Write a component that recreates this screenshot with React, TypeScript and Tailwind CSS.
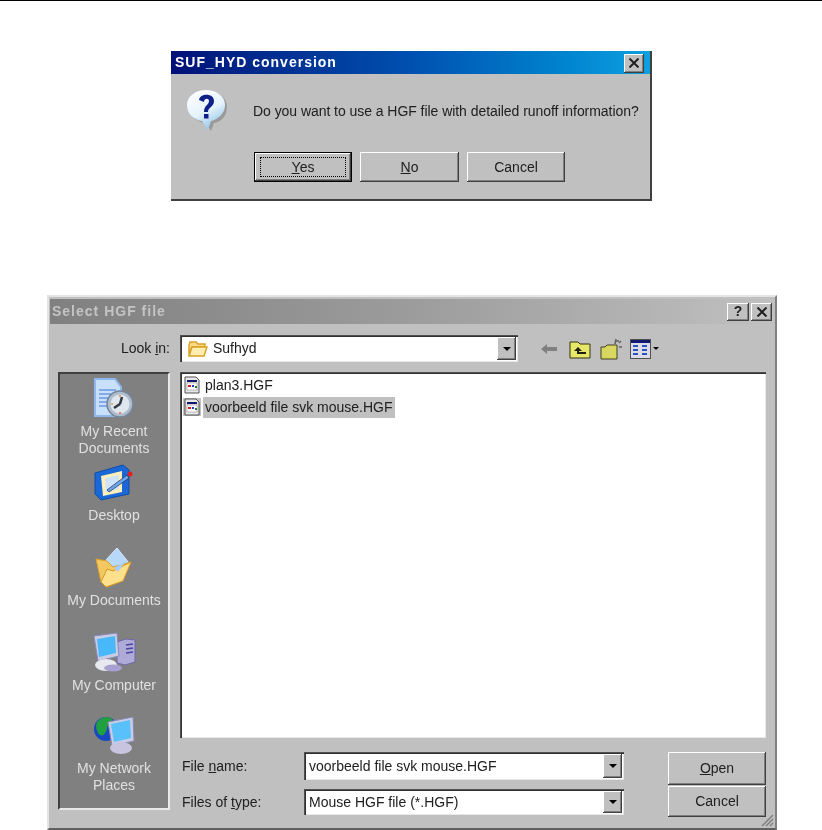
import type React from "react"

const raised = "shadow-[inset_-1px_-1px_0_#404040,inset_1px_1px_0_#ffffff,inset_-2px_-2px_0_#808080]"
const sunken = "shadow-[inset_1px_1px_0_#505050,inset_2px_2px_0_#303030,inset_-1px_-1px_0_#e8e8e8]"

const QuestionIcon = () => (
  <svg width="42" height="44" viewBox="0 0 42 44">
    <defs>
      <linearGradient id="bubble" x1="0.2" y1="0" x2="0.7" y2="1">
        <stop offset="0" stopColor="#ffffff" />
        <stop offset="0.55" stopColor="#e4f2fc" />
        <stop offset="1" stopColor="#88c0e8" />
      </linearGradient>
    </defs>
    <path d="M22 3C32 3 41 8 41 18s-7 15-13 16l-3 8-5-8C10 33 3 27 3 18S12 3 22 3z" fill="#9a9a9a" />
    <path d="M20 1C30 1 39 7 39 16s-8 15-14 16l-3 9-6-9C8 31 1 25 1 16S10 1 20 1z" fill="url(#bubble)" />
    <path d="M13 11c1-7 15-7 15 1 0 6-6 6-6 11h-4c0-7 5-7 5-11 0-3-5-3-5 1z" fill="#10208a" />
    <rect x="18" y="25" width="4.5" height="4.5" fill="#10208a" />
  </svg>
)

const CloseGlyph = () => (
  <svg width="12" height="10" viewBox="0 0 12 10">
    <path d="M1.5 0.5L10.5 9.5M10.5 0.5L1.5 9.5" stroke="#202020" strokeWidth="2" />
  </svg>
)

const FolderSmall = () => (
  <svg width="20" height="18" viewBox="0 0 20 18">
    <path d="M1 5l1-3h6l2 2h7v3H4L1 15z" fill="#f8dc88" stroke="#d8a020" strokeWidth="1.4" />
    <path d="M1 16l3-9h15l-3 9z" fill="#ffeeb0" stroke="#d8a020" strokeWidth="1.4" />
  </svg>
)

const FileIcon = () => (
  <svg width="18" height="18" viewBox="0 0 18 18">
    <path d="M2 1h11l3 3v13H2z" fill="#e8e8e8" stroke="#505050" />
    <rect x="4" y="4" width="10" height="2" fill="#101870" />
    <rect x="4" y="7" width="10" height="7" fill="#ffffff" stroke="#808080" strokeWidth="0.5" />
    <rect x="5" y="9" width="3" height="2" fill="#d02020" />
    <rect x="9" y="9" width="2" height="2" fill="#2040d0" />
    <rect x="12" y="10" width="2" height="2" fill="#208040" />
  </svg>
)

const RecentIcon = () => (
  <svg width="40" height="41" viewBox="0 0 40 41">
    <path d="M1 1h20l6 8v29H1z" fill="#c8e0fa" stroke="#8fb8ee" strokeWidth="2" />
    <path d="M5 12h17M5 16h13M5 20h10M5 24h10M5 28h10" stroke="#6a98e0" strokeWidth="1.5" />
    <circle cx="26" cy="26" r="13" fill="#aebccb" stroke="#74859a" strokeWidth="1.5" />
    <circle cx="26" cy="26" r="9.5" fill="#dfe6ee" />
    <path d="M26 26l-6 4M26 26l2-7" stroke="#303840" strokeWidth="2.5" />
    <circle cx="26" cy="18" r="1" fill="#e08050" />
    <circle cx="26" cy="35" r="1" fill="#e06060" />
    <circle cx="18" cy="26" r="1" fill="#e0a050" />
  </svg>
)

const DesktopIcon = () => (
  <svg width="40" height="37" viewBox="0 0 40 37">
    <path d="M1 9l28-8 6 5v24L7 36 1 30z" fill="#1a68d8" stroke="#104ca8" />
    <path d="M7 12l21-5v21L9 32z" fill="#ffeeb8" />
    <path d="M11 14l14-3v14l-13 3z" fill="#cfe4fa" />
    <path d="M13 26l20-15 2 3-20 14z" fill="#70a8e8" stroke="#203870" strokeWidth="0.8" />
    <circle cx="36" cy="10" r="2.5" fill="#e02020" />
  </svg>
)

const DocumentsIcon = () => (
  <svg width="38" height="41" viewBox="0 0 38 41">
    <path d="M10 14L22 1l12 15-14 12z" fill="#b8d8fa" stroke="#d8eaff" />
    <path d="M1 12l11 2 6 6 18-5-9 18-15 7-6-5z" fill="#f4c860" stroke="#d8a030" />
    <path d="M6 35l6-13 6 2 18-9-8 19-17 6z" fill="#fce08c" stroke="#d89820" />
    <path d="M19 21l12-7-8 11z" fill="#a8cdf4" />
  </svg>
)

const ComputerIcon = () => (
  <svg width="43" height="40" viewBox="0 0 43 40">
    <path d="M24 10l9-3 9 1v22l-10 3-8-2z" fill="#b0aad8" stroke="#6c66a8" />
    <path d="M33 13l7-1M33 17l7-1M33 21l7-1" stroke="#48489c" strokeWidth="1.5" />
    <path d="M1 4L24 1l2 23-21 5z" fill="#c8cce4" stroke="#8a8ab8" />
    <path d="M4 7l18-3 1 17-17 4z" fill="#48b8fa" />
    <ellipse cx="13" cy="33" rx="11" ry="6" fill="#e8e8f0" />
    <ellipse cx="20" cy="36" rx="9" ry="3.5" fill="#a8a0d0" />
  </svg>
)

const NetworkIcon = () => (
  <svg width="42" height="38" viewBox="0 0 42 38">
    <circle cx="13" cy="13" r="12" fill="#1848c0" />
    <path d="M4 6c5-6 12-6 15-3 2 5-5 5-5 9s-4 9-7 7-5-9-3-13z" fill="#20a040" />
    <path d="M15 6l25-5 1 24-22 5z" fill="#c8cce4" stroke="#8a8ab8" />
    <path d="M18 8l19-4 1 18-17 4z" fill="#58c0fa" />
    <ellipse cx="28" cy="32" rx="11" ry="6" fill="#c8c4e0" />
  </svg>
)

const BackArrow = () => (
  <svg width="16" height="12" viewBox="0 0 16 12">
    <path d="M0 6l6-5v3h10v4H6v3z" fill="#808080" />
  </svg>
)

const UpFolder = () => (
  <svg width="22" height="20" viewBox="0 0 22 20">
    <path d="M1 19V3h8l2 2h10v14z" fill="#e8e868" stroke="#303010" />
    <path d="M9 8l-4 4h3v3h9v-2h-7v-1h3z" fill="#202010" />
  </svg>
)

const NewFolder = () => (
  <svg width="22" height="22" viewBox="0 0 22 22">
    <path d="M1 21V9h4l2-2h10v14z" fill="#d8d860" stroke="#404020" />
    <path d="M15 6l1-5M19 5l2-2M19 9h3M16 3h3" stroke="#606060" strokeWidth="1.5" />
  </svg>
)

const ViewsIcon = () => (
  <svg width="21" height="20" viewBox="0 0 21 20">
    <rect x="0.5" y="0.5" width="20" height="19" fill="#dcdce8" stroke="#505050" />
    <rect x="1" y="1" width="19" height="3" fill="#101870" />
    <path d="M3 7h5M3 11h5M3 15h5M12 7h5M12 11h5M12 15h5" stroke="#3050c0" strokeWidth="2" />
  </svg>
)

const ComboArrow = () => (
  <div className={`w-[19px] flex items-center justify-center bg-[#c0c0c0] ${raised}`}>
    <div className="w-0 h-0 border-x-[4px] border-x-transparent border-t-[4px] border-t-black" />
  </div>
)

const WinButton: React.FC<{ className: string; children: React.ReactNode }> = ({ className, children }) => (
  <div className={`flex items-center justify-center bg-[#c0c0c0] text-[14px] text-[#202020] ${raised} ${className}`}>
    {children}
  </div>
)

const PlaceItem: React.FC<{ icon: React.ReactNode; label: string[]; height: string }> = ({ icon, label, height }) => (
  <div className={`flex flex-col items-center ${height}`}>
    <div className="h-[44px] flex items-center">{icon}</div>
    <div className="mt-[3px] text-center text-[14px] leading-[17px] text-[#e0e0e0]">
      {label.map((l) => (
        <div key={l}>{l}</div>
      ))}
    </div>
  </div>
)

const FileRow: React.FC<{ name: string; selected?: boolean }> = ({ name, selected }) => (
  <div className="flex items-center h-[22px] gap-[2px]">
    <div className={selected ? "bg-[#c0c0c0]" : ""}>
      <FileIcon />
    </div>
    <span className={`px-[2px] text-[14px] leading-[21px] text-[#202020] ${selected ? "bg-[#c0c0c0]" : ""}`}>{name}</span>
  </div>
)

export default function App() {
  return (
    <div className="w-[822px] h-[830px] overflow-hidden bg-white blur-[0.7px] font-['Liberation_Sans',Arial,sans-serif]">
      <div className="h-px bg-black" />

      {/* message box */}
      <div className="mt-[50px] ml-[171px] w-[481px] h-[150px] bg-[#c0c0c0] border-r-2 border-b-2 border-[#404040] flex flex-col">
        <div className="h-[23px] pl-[4px] pr-[6px] flex items-center justify-between bg-gradient-to-r from-[#000f78] via-[#0050b0] to-[#10a0e0]">
          <span className="text-[14px] font-bold tracking-[1px] text-white">SUF_HYD conversion</span>
          <div className={`w-[20px] h-[19px] mt-[1px] flex items-center justify-center bg-[#c0c0c0] ${raised}`}>
            <CloseGlyph />
          </div>
        </div>
        <div className="flex items-center pl-[15px] mt-[15px]">
          <QuestionIcon />
          <span className="ml-[25px] text-[14px] tracking-[-0.05px] text-[#202020]">
            Do you want to use a HGF file with detailed runoff information?
          </span>
        </div>
        <div className="flex gap-[8px] ml-[83px] mt-[19px]">
          <div className="w-[98px] h-[30px] p-px bg-black">
            <WinButton className="w-full h-full">
              <div className="w-[86px] h-[20px] border border-dotted border-black flex items-center justify-center">
                <span><u>Y</u>es</span>
              </div>
            </WinButton>
          </div>
          <WinButton className="w-[99px] h-[30px]"><span><u>N</u>o</span></WinButton>
          <WinButton className="w-[98px] h-[30px]">Cancel</WinButton>
        </div>
      </div>

      {/* open file dialog */}
      <div className="mt-[94px] ml-[47px] w-[730px] h-[535px] bg-[#c0c0c0] border-t-2 border-l-2 border-[#e4e4e4] border-r-2 border-r-[#808080] border-b-2 border-b-[#606060] flex flex-col relative">
        <div className="mt-[2px] ml-px mr-[2px] h-[25px] pl-[2px] pr-px flex items-center justify-between bg-gradient-to-r from-[#808080] via-[#9c9c9c] to-[#c0c0c0]">
          <span className="text-[14px] font-bold tracking-[1px] text-[#c4c4c4]">Select HGF file</span>
          <div className="flex gap-[2px]">
            <div className={`w-[22px] h-[18px] flex items-center justify-center bg-[#c0c0c0] text-[14px] font-bold text-[#202020] ${raised}`}>?</div>
            <div className={`w-[21px] h-[18px] flex items-center justify-center bg-[#c0c0c0] ${raised}`}><CloseGlyph /></div>
          </div>
        </div>

        <div className="flex items-center mt-[11px] h-[27px]">
          <span className="w-[121px] text-right text-[14px] text-[#202020]">Look <u>i</u>n:</span>
          <div className={`ml-[10px] w-[338px] h-full flex bg-white p-[2px] ${sunken}`}>
            <div className="flex-1 flex items-center gap-[5px] pl-[6px] text-[14px] text-[#202020]">
              <FolderSmall />
              Sufhyd
            </div>
            <ComboArrow />
          </div>
          <div className="flex items-center ml-[23px]">
            <BackArrow />
            <div className="ml-[12px]"><UpFolder /></div>
            <div className="ml-[9px]"><NewFolder /></div>
            <div className="ml-[8px]"><ViewsIcon /></div>
            <div className="ml-[2px] w-0 h-0 border-x-[3px] border-x-transparent border-t-[3px] border-t-black" />
          </div>
        </div>

        <div className="flex mt-[10px] h-[445px]">
          <div className="ml-[9px] w-[112px] flex flex-col">
            <div className="w-full h-[438px] bg-[#808080] border-l-2 border-t-2 border-[#404040] border-r-2 border-r-[#e8e8e8] border-b-2 border-b-[#e8e8e8] pt-[2px] flex flex-col">
              <PlaceItem icon={<RecentIcon />} label={["My Recent", "Documents"]} height="h-[84px]" />
              <PlaceItem icon={<DesktopIcon />} label={["Desktop"]} height="h-[85px]" />
              <PlaceItem icon={<DocumentsIcon />} label={["My Documents"]} height="h-[85px]" />
              <PlaceItem icon={<ComputerIcon />} label={["My Computer"]} height="h-[83px]" />
              <PlaceItem icon={<NetworkIcon />} label={["My Network", "Places"]} height="h-[85px]" />
            </div>
          </div>
          <div className="ml-[10px] flex flex-col">
            <div className={`w-[586px] h-[366px] bg-white pt-[2px] pl-[3px] ${sunken}`}>
              <FileRow name="plan3.HGF" />
              <FileRow name="voorbeeld file svk mouse.HGF" selected />
            </div>
            <div className="flex mt-[14px]">
              <div className="w-[124px] flex flex-col text-[14px] text-[#202020]">
                <div className="h-[28px] flex items-center pl-[2px]"><span>File <u>n</u>ame:</span></div>
                <div className="h-[36px] pt-[12px] pl-[2px]">Files of <u>t</u>ype:</div>
              </div>
              <div className="w-[320px] flex flex-col gap-[9px]">
                <div className={`h-[28px] flex bg-white p-[2px] ${sunken}`}>
                  <div className="flex-1 flex items-center pl-[3px] text-[14px] text-[#202020]">voorbeeld file svk mouse.HGF</div>
                  <ComboArrow />
                </div>
                <div className={`h-[26px] flex bg-white p-[2px] ${sunken}`}>
                  <div className="flex-1 flex items-center pl-[3px] text-[14px] text-[#202020]">Mouse HGF file (*.HGF)</div>
                  <ComboArrow />
                </div>
              </div>
              <div className="ml-[44px] flex flex-col gap-px">
                <WinButton className="w-[98px] h-[33px]"><span><u>O</u>pen</span></WinButton>
                <WinButton className="w-[98px] h-[31px]">Cancel</WinButton>
              </div>
            </div>
          </div>
        </div>

        {/* size grip */}
        <svg className="absolute right-px bottom-px" width="14" height="14" viewBox="0 0 14 14">
          <path d="M13 2L2 13M13 6L6 13M13 10L10 13" stroke="#808080" strokeWidth="1.5" />
        </svg>
      </div>
    </div>
  )
}
